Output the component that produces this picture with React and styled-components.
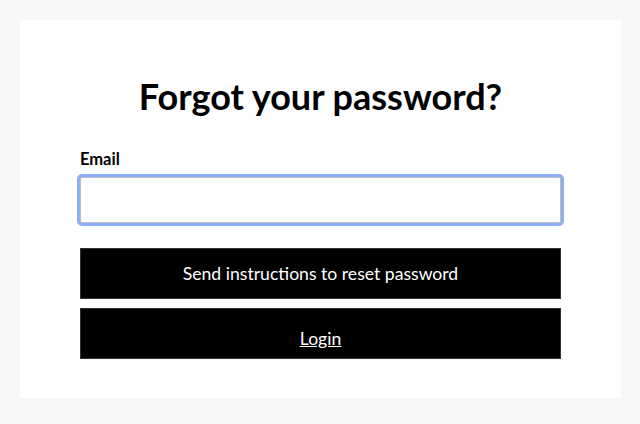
import React from 'react'
import styled, { createGlobalStyle } from 'styled-components'

const GlobalStyle = createGlobalStyle`
  html, body {
    margin: 0;
    padding: 0;
    background: #f7f7f7;
    font-family: Lato, "Open Sans", sans-serif;
  }
  * { box-sizing: border-box; }
`

function App() {
  return (
    <>
      <GlobalStyle />
      <Page>
        <Card>
          <Title>Forgot your password?</Title>
          <Form onSubmit={e => e.preventDefault()}>
            <Label htmlFor="email">Email</Label>
            <Input id="email" type="email" autoFocus />
            <Button type="submit">Send instructions to reset password</Button>
            <LinkButton href="#">Login</LinkButton>
          </Form>
        </Card>
      </Page>
    </>
  )
}

export default App

const Page = styled.div`
  min-height: 424px;
  padding: 20px 19px 26px 20px;
`

const Card = styled.div`
  background: #fff;
  padding: 54px 60px 40px;
  display: flex;
  flex-direction: column;
  height: 378px;
`

const Title = styled.h1`
  margin: 0 0 31px;
  text-align: center;
  font-size: 36px;
  font-weight: 700;
  line-height: 44px;
  color: #000;
`

const Form = styled.form`
  display: flex;
  flex-direction: column;
`

const Label = styled.label`
  font-size: 16.5px;
  font-weight: 700;
  color: #000;
  line-height: 20px;
  margin-bottom: 8px;
`

const Input = styled.input`
  height: 46px;
  border: 1px solid #bdbdbd;
  border-radius: 2px;
  outline: none;
  box-shadow: 0 0 0 3px #8db0f5;
  padding: 0 10px;
  font-size: 17px;
  font-family: inherit;
  margin-bottom: 25px;
  caret-color: #000;
  &:focus {
    box-shadow: 0 0 0 3px #8db0f5;
  }
`

const Button = styled.button`
  height: 51px;
  background: #000;
  color: #fff;
  border: 1px solid #333;
  font-family: inherit;
  font-size: 17.6px;
  font-weight: 400;
  cursor: pointer;
  margin-bottom: 9px;
`

const LinkButton = styled.a`
  height: 51px;
  background: #000;
  color: #fff;
  border: 1px solid #333;
  font-size: 17.6px;
  display: flex;
  align-items: center;
  justify-content: center;
  padding-top: 10px;
  text-decoration: underline;
`
